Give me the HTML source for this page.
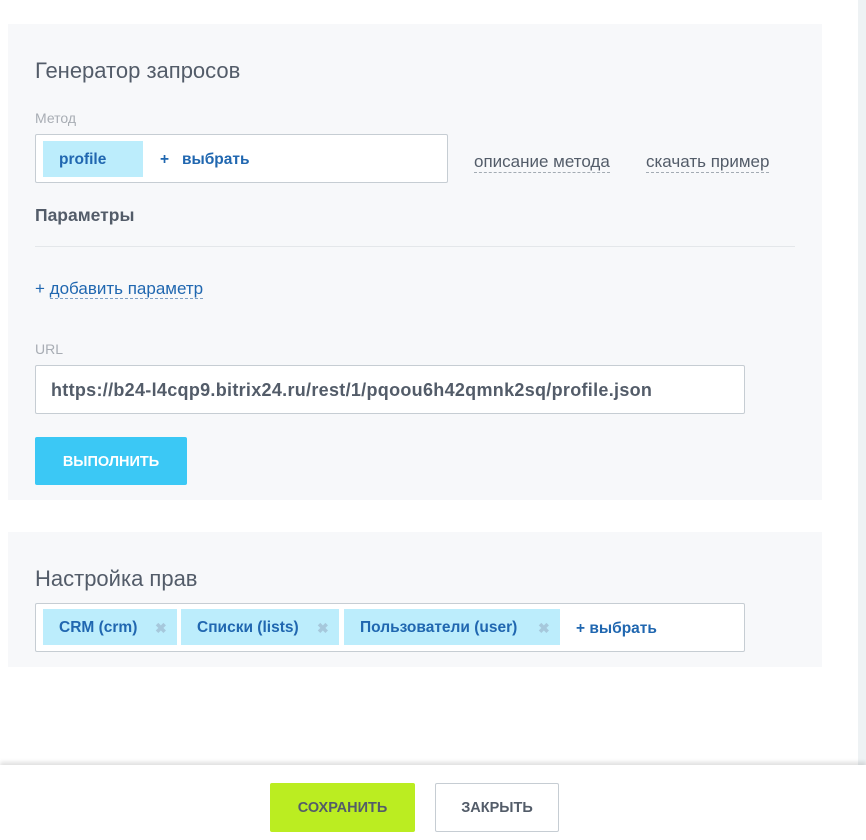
<!DOCTYPE html>
<html><head><meta charset="utf-8"><style>
*{box-sizing:border-box;margin:0;padding:0}
body{width:866px;height:840px;background:#fff;font-family:"Liberation Sans",sans-serif;position:relative;overflow:hidden}
.sb{position:absolute;left:858px;top:0;width:8px;height:765px;background:#eef2f4}
.panel{position:absolute;left:8px;width:814px;background:#f7f8fa}
.h{position:absolute;left:27px;font-size:22px;color:#535c69}
.lbl{position:absolute;left:27px;font-size:14px;color:#a8adb4}
.box{position:absolute;background:#fff;border:1px solid #c6cdd3;border-radius:2px}
.tag{position:absolute;background:#bcedfc;color:#2067b0;font-weight:bold;font-size:15.5px;height:36px;line-height:38px}
.x{color:#a6c8dc;font-size:14px;position:absolute;top:0}
.sel{position:absolute;color:#2067b0;font-weight:bold;font-size:15.5px}
.dl{position:absolute;font-size:17px;color:#535c69;border-bottom:1px dashed #a3abb3;line-height:20px}
.foot{position:absolute;left:0;top:765px;width:866px;height:75px;background:#fff;box-shadow:0 -3px 4px rgba(0,0,0,.12)}
.btn{position:absolute;font-weight:bold;font-size:14.5px;text-align:center;color:#535c69}
</style></head><body>
<div class="sb"></div>
<div class="panel" style="top:24px;height:476px">
 <div class="h" style="top:34px">Генератор запросов</div>
 <div class="lbl" style="top:86px">Метод</div>
 <div class="box" style="left:27px;top:110px;width:413px;height:49px">
  <div class="tag" style="left:7px;top:6px;width:100px;padding-left:16px">profile</div>
  <div class="sel" style="left:124px;top:16px">+&nbsp;&nbsp; выбрать</div>
 </div>
 <div class="dl" style="left:466px;top:128px">описание метода</div>
 <div class="dl" style="left:638px;top:128px">скачать пример</div>
 <div style="position:absolute;left:27px;top:181px;font-size:17.5px;font-weight:bold;color:#535c69">Параметры</div>
 <div style="position:absolute;left:27px;top:222px;width:760px;height:1px;background:#e4e7ea"></div>
 <div style="position:absolute;left:27px;top:255px;font-size:17px;color:#2067b0">+ <span style="border-bottom:1px dashed #7d9fc4">добавить параметр</span></div>
 <div class="lbl" style="top:317px">URL</div>
 <div class="box" style="left:27px;top:341px;width:710px;height:49px;padding:14px 0 0 15px;font-weight:bold;font-size:18px;color:#535c69;letter-spacing:.3px">https://b24-l4cqp9.bitrix24.ru/rest/1/pqoou6h42qmnk2sq/profile.json</div>
 <div style="position:absolute;left:27px;top:413px;width:152px;height:48px;background:#3bc8f5;border-radius:2px;color:#fff;font-weight:bold;font-size:14.5px;line-height:50px;text-align:center">ВЫПОЛНИТЬ</div>
</div>
<div class="panel" style="top:532px;height:135px">
 <div class="h" style="top:34px">Настройка прав</div>
 <div class="box" style="left:27px;top:71px;width:710px;height:49px">
  <div class="tag" style="left:7px;top:5px;width:134px;padding-left:16px">CRM (crm)<span class="x" style="left:112px">✖</span></div>
  <div class="tag" style="left:145px;top:5px;width:158px;padding-left:16px">Списки (lists)<span class="x" style="left:136px">✖</span></div>
  <div class="tag" style="left:308px;top:5px;width:216px;padding-left:16px">Пользователи (user)<span class="x" style="left:194px">✖</span></div>
  <div class="sel" style="left:540px;top:16px">+ выбрать</div>
 </div>
</div>
<div class="foot">
 <div class="btn" style="left:270px;top:18px;width:145px;height:49px;line-height:50px;background:#bbed21;border-radius:2px">СОХРАНИТЬ</div>
 <div class="btn" style="left:435px;top:18px;width:124px;height:49px;line-height:48px;border:1px solid #c6cdd3;border-radius:2px">ЗАКРЫТЬ</div>
</div>
</body></html>
